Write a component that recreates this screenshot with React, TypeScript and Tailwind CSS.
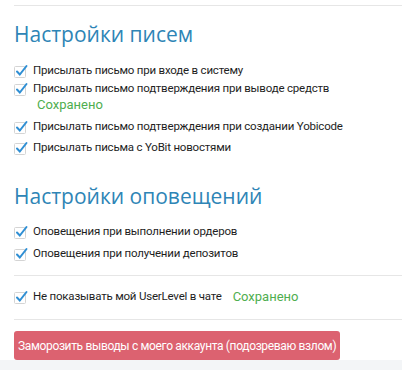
import React from "react";

const Check = () => (
  <svg width="14" height="14" viewBox="0 0 14 14" className="shrink-0">
    <rect x="0.5" y="2.5" width="11" height="11" rx="1" fill="#fff" stroke="#d4d4d4" />
    <path d="M3 7.5 L5.8 10.5 L12.5 2" fill="none" stroke="#2f8fd4" strokeWidth="2" strokeLinecap="round" />
  </svg>
);

const body = { fontFamily: 'Roboto, "Open Sans", sans-serif' };

const Row = ({ label, saved, className = "" }: { label: string; saved?: boolean; className?: string }) => (
  <div className={`flex items-center gap-[5px] h-[18px] ${className}`} style={body}>
    <Check />
    <span className="text-[11.5px] tracking-[-0.2px] text-[#1e1e1e]">{label}</span>
    {saved && <span className="ml-[6px] text-[13px] text-[#4fae4f]">Сохранено</span>}
  </div>
);

export default function App() {
  return (
    <div className="w-[402px] h-[370px] bg-white overflow-hidden flex flex-col" style={{ fontFamily: '"Open Sans", sans-serif' }}>
      <div className="ml-[14px] mt-[5px] border-t border-[#e6e6e6]" />

      <h2 className="ml-[14px] mt-[15px] text-[21px] leading-[26px] text-[#2e85b6]">Настройки писем</h2>
      <div className="ml-[14px] mt-[15px] flex flex-col">
        <Row label="Присылать письмо при входе в систему" />
        <Row label="Присылать письмо подтверждения при выводе средств" />
        <div className="pl-[23px] h-[14px] text-[13px] leading-[14px] text-[#4fae4f]" style={body}>Сохранено</div>
        <Row className="mt-[6px]" label="Присылать письмо подтверждения при создании Yobicode" />
        <Row className="mt-[3px]" label="Присылать письма с YoBit новостями" />
      </div>

      <h2 className="ml-[14px] mt-[26px] text-[21px] leading-[26px] text-[#2e85b6]">Настройки оповещений</h2>
      <div className="ml-[14px] mt-[14px] flex flex-col">
        <Row label="Оповещения при выполнении ордеров" />
        <Row className="mt-[4px]" label="Оповещения при получении депозитов" />
      </div>

      <div className="ml-[14px] mt-[12px] border-t border-[#e6e6e6]" />
      <div className="ml-[14px] mt-[12px]">
        <Row label="Не показывать мой UserLevel в чате" saved />
      </div>
      <div className="ml-[14px] mt-[13px] border-t border-[#e6e6e6]" />

      <div className="ml-[14px] mt-[11px]">
        <button className="h-[29px] px-[4px] rounded-[3px] bg-[#dc6270] text-white text-[12px] tracking-[-0.35px]" style={body}>
          Заморозить выводы с моего аккаунта (подозреваю взлом)
        </button>
      </div>
      <div className="mt-auto h-[10px] bg-[#f3f5f7]" />
    </div>
  );
}
